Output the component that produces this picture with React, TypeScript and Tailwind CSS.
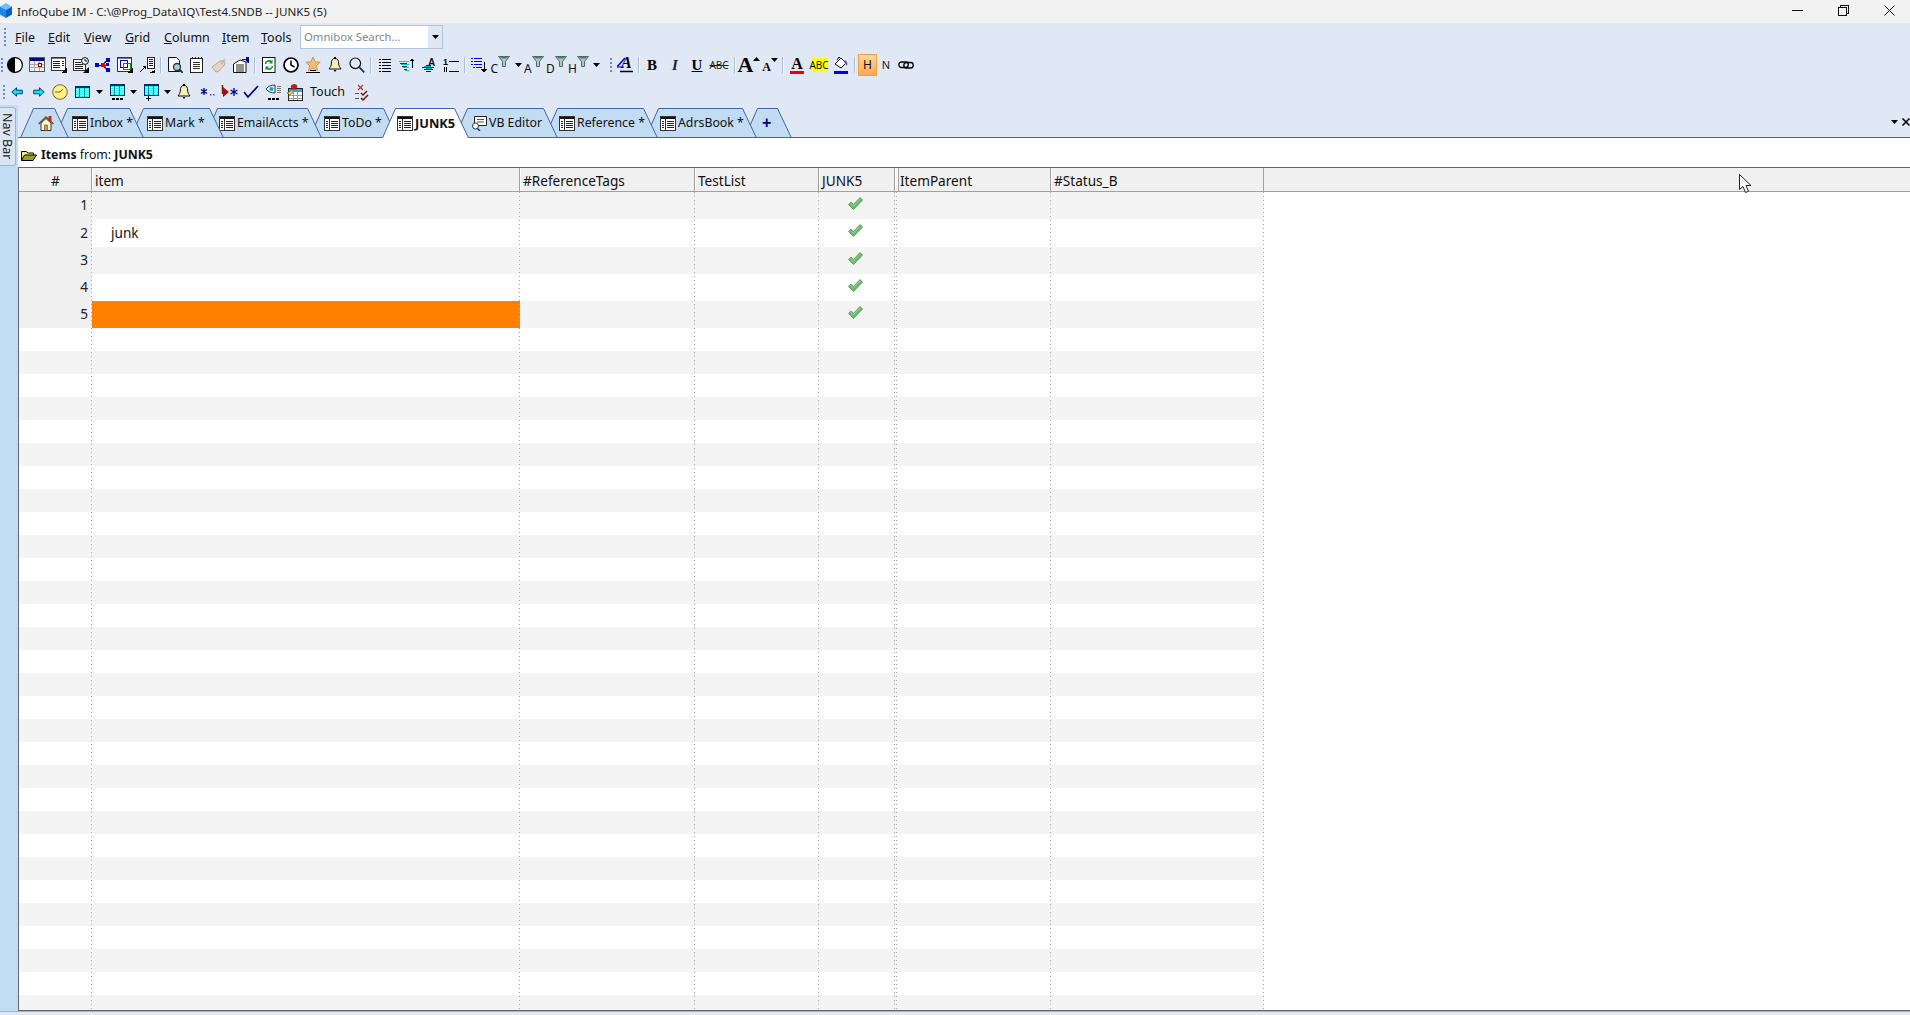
import type { ReactNode } from "react";

const COLS = "grid grid-cols-[73px_428px_175px_124px_76px_2px_154px_213px]";
const DOTS =
  "bg-[repeating-linear-gradient(to_bottom,#a8a8a8_0,#a8a8a8_1px,transparent_1px,transparent_4px)]";

function Ic({ w = 16, h = 16, crisp, children }: { w?: number; h?: number; crisp?: boolean; children: ReactNode }) {
  return (
    <svg width={w} height={h} viewBox={`0 0 ${w} ${h}`} className="block shrink-0" fill="none" shapeRendering={crisp ? "crispEdges" : undefined}>
      {children}
    </svg>
  );
}

/* toolbar icons, drawn at real pixel size */
const Corner = () => <path d="M16 10v6h-6z" fill="#000" />;

const Contrast = () => (
  <Ic>
    <circle cx="8" cy="8" r="7.4" fill="#fff" stroke="#000" strokeWidth="1.2" />
    <path d="M8 .6a7.4 7.4 0 0 0 0 14.8z" fill="#000" />
  </Ic>
);
const Calendar = () => (
  <Ic crisp>
    <rect x=".5" y=".5" width="15" height="14" fill="#eee" stroke="#555" />
    <rect x="1" y="1" width="14" height="3" fill="#000080" />
    <path d="M1 7.5h14M1 10.5h14M5.5 4v10M10.5 4v10" stroke="#aaa" />
    <rect x="9.5" y="6.5" width="3" height="3" fill="#fff" stroke="#a00000" />
  </Ic>
);
const ListCorner = () => (
  <Ic crisp>
    <rect x=".5" y=".5" width="14" height="13" fill="#fff" stroke="#333" />
    <rect x="1" y="1" width="13" height="1" fill="#777" />
    <path d="M2 4.5h7M2 6.5h7M2 8.5h7M2 10.5h7M11 4.5h2M11 6.5h2M11 8.5h2" stroke="#222" />
    <Corner />
  </Ic>
);
const ListClock = () => (
  <Ic>
    <g shapeRendering="crispEdges">
      <rect x=".5" y="2.5" width="12" height="11" fill="#fff" stroke="#333" />
      <path d="M2 5.5h6M2 7.5h8M2 9.5h8M2 11.5h8" stroke="#222" />
    </g>
    <circle cx="12" cy="4" r="3.4" fill="#fff" stroke="#000" />
    <path d="M12 2v2h2" stroke="#000" />
    <Corner />
  </Ic>
);
const Tree = () => (
  <Ic crisp>
    <path d="M4 8h8M8 8 12 3M8 8l4 5" stroke="#111" />
    <rect x="0" y="6" width="4" height="4" fill="#0000e0" />
    <rect x="6" y="6" width="4" height="4" fill="#e00000" />
    <rect x="11" y="1" width="4" height="4" fill="#0000e0" />
    <rect x="11" y="6" width="3" height="3" fill="#0000e0" />
    <rect x="11" y="11" width="4" height="4" fill="#0000e0" />
  </Ic>
);
const Frames = () => (
  <Ic crisp>
    <rect x=".5" y=".5" width="14" height="14" fill="#fff" stroke="#333" />
    <rect x="1" y="1" width="13" height="1" fill="#777" />
    <rect x="3.5" y="3.5" width="7" height="7" stroke="#0000d0" />
    <rect x="6.5" y="6.5" width="7" height="6" stroke="#009000" />
    <Corner />
  </Ic>
);
const DocArrow = () => (
  <Ic crisp>
    <rect x="8.5" y=".5" width="7" height="11" fill="#fff" stroke="#222" />
    <path d="M10 2.5h4M10 4.5h4M10 6.5h4M10 8.5h4" stroke="#222" />
    <path d="M1 15l5-5" stroke="#000" shapeRendering="auto" />
    <path d="M3 9h4v4zM10 16h6v-3z" fill="#000" />
  </Ic>
);
const DocMag = () => (
  <Ic>
    <path d="M1.5.5h8l3 3v11h-11z" fill="#fff" stroke="#111" />
    <circle cx="10" cy="10" r="3.5" fill="#9fd4d8" stroke="#333" strokeWidth="1.3" />
    <path d="M12.5 12.5 16 16" stroke="#224" strokeWidth="1.8" />
  </Ic>
);
const Notepad = () => (
  <Ic w={14} crisp>
    <rect x=".5" y="1.5" width="12" height="14" rx="1" fill="#fff" stroke="#222" />
    <path d="M2 .5h1M5 .5h1M8 .5h1M11 .5h1" stroke="#222" />
    <path d="M3 5.5h7M3 7.5h7M3 9.5h7M3 11.5h7" stroke="#333" />
  </Ic>
);
const Tag = () => (
  <Ic>
    <path d="M1 10 9 4h4l1 3-6 7-3 1z" fill="#e2d6c4" stroke="#bba98f" />
    <circle cx="11" cy="6" r="1" fill="#fff" stroke="#ab9b82" strokeWidth=".6" />
    <path d="M11 5c1-3 4-4 3-1" stroke="#b8ab98" strokeWidth=".8" />
  </Ic>
);
const TagList = () => (
  <Ic>
    <path d="M.5 7 7 3l6 2v10.5H.5z" fill="#fff" stroke="#111" />
    <path d="M3 8h8M3 10h8M3 12h8M3 14h8" stroke="#222" />
    <path d="M9 2.5h5" stroke="#222" />
    <path d="M13 0h3v6h-1l-2-2z" fill="#000080" />
  </Ic>
);
const Recycle = () => (
  <Ic w={14}>
    <rect x=".5" y=".5" width="12.5" height="15" fill="#fff" stroke="#111" />
    <path d="M3.5 7a3.5 3.5 0 0 1 6-2" stroke="#0a8f2a" strokeWidth="1.6" />
    <path d="M10.5 9a3.5 3.5 0 0 1-6 2" stroke="#0a8f2a" strokeWidth="1.6" />
    <path d="M10.5 2.5v4h-3.5zM3.5 13.5v-4h3.5z" fill="#0a8f2a" />
  </Ic>
);
const Clock = () => (
  <Ic>
    <circle cx="8" cy="8" r="7" fill="#fff" stroke="#000" strokeWidth="1.7" />
    <path d="M8 3.5V8l3.5 2" stroke="#000" strokeWidth="1.5" />
  </Ic>
);
const StarLine = () => (
  <Ic>
    <path d="M8 0l2.2 4.7 5 .6-3.7 3.4 1 5L8 11.2l-4.5 2.5 1-5L.8 5.3l5-.6z" fill="#f4bd72" stroke="#c58b4a" strokeWidth=".8" />
    <rect x="1" y="15" width="14" height="1" fill="#000" />
    <rect x="5" y="13" width="6" height="1" fill="#000" />
  </Ic>
);
const Bell = () => (
  <Ic w={14}>
    <path d="M7 1.5c-2.6 0-3.6 2-3.6 4.5 0 3-1.4 4.5-2.4 6h12c-1-1.500-2.400-3-2.400-6C10.600 3.500 9.600 1.500 7 1.500z" fill="#f5f0b8" stroke="#111" />
    <path d="M5.500 13h3l-1.500 2z" fill="#000" />
    <rect x="6" y="0" width="2" height="2" fill="#000" />
  </Ic>
);
const Mag = () => (
  <Ic>
    <circle cx="6.300" cy="6.300" r="5.300" fill="none" stroke="#111" strokeWidth="1.200" />
    <path d="M10.200 10.200 15.300 15.300" stroke="#1a2f8f" strokeWidth="1.800" />
  </Ic>
);
const Lines = () => (
  <Ic w={12} crisp>
    <path d="M0 2.500h2M3 2.500h9M0 5.500h2M3 5.500h9M0 8.500h2M3 8.500h9M0 11.500h2M3 11.500h9M0 14.500h2M3 14.500h9" stroke="#000" />
  </Ic>
);
const CyanList = () => (
  <Ic crisp>
    <path d="M0 4.500h10M2 7.500h8M4 10.500h6M6 13.500h4" stroke="#00c8e0" />
    <path d="M1 6.500h7M3 9.500h5M5 12.500h3" stroke="#333" />
    <path d="M13 3v8" stroke="#000" />
    <path d="M13 1l2.500 3h-5z" fill="#000" />
  </Ic>
);
const ALines = () => (
  <Ic>
    <text x="7" y="9" fontFamily="Liberation Sans" fontSize="10" fontWeight="700" fill="#111">A</text>
    <g shapeRendering="crispEdges">
      <path d="M5 8.500h5M1 10.500h12M3 12.500h9M5 14.500h5" stroke="#222" />
      <path d="M3 9.500h7M5 11.500h6" stroke="#00b0c0" />
    </g>
  </Ic>
);
const NumLines = () => (
  <Ic>
    <text x="0" y="8" fontFamily="Liberation Sans" fontSize="9" fontWeight="700" fill="#000">1</text>
    <g shapeRendering="crispEdges">
      <path d="M6 4.500h10M6 14.500h10" stroke="#000" />
      <path d="M1.500 10v5M3.500 10v5" stroke="#000" />
    </g>
  </Ic>
);
const BlueList = () => (
  <Ic crisp>
    <path d="M0 1.500h2M3 1.500h8M0 4.500h2M3 4.500h8M0 7.500h2M3 7.500h8M2 10.500h2M5 10.500h6" stroke="#0000f0" />
    <path d="M13 5v8" stroke="#000" />
    <path d="M13 16l-3-4h6z" fill="#000" />
  </Ic>
);
const Funnel = () => (
  <svg width="12" height="11" viewBox="0 0 12 11" className="block">
    <path d="M.5.5h11L7.500 5.500v5h-3v-5z" fill="#b4c6c4" stroke="#4f6a66" />
    <path d="M2 1h8L8.500 2.500h-5z" fill="#2a8a82" />
  </svg>
);
function FilterLetter({ ch }: { ch: string }) {
  return (
    <div className="flex h-[22px] w-[22px] items-start pt-[2px]">
      <span className="mt-[7px] text-[12px] leading-[12px] text-[#111]">{ch}</span>
      <Funnel />
    </div>
  );
}
const Caret = () => (
  <svg width="7" height="4" viewBox="0 0 7 4" className="block shrink-0"><path d="M0 0h7L3.500 4z" fill="#000" /></svg>
);
const Gripper = () => (
  <div className="h-[14px] w-[2px] shrink-0 bg-[repeating-linear-gradient(to_bottom,#5f8fd0_0,#5f8fd0_2px,transparent_2px,transparent_4px)]" />
);
const Sep = () => (
  <div className="flex w-[6px] shrink-0 justify-center"><div className="h-[16px] w-[2px] border-l border-r border-l-[#a9bdd4] border-r-[#f4f8fc]" /></div>
);
const ArrowL = () => (
  <Ic w={12} h={10}><path d="M.8 5 5.500.8v2.400h5.800v3.600H5.500v2.400z" fill="#00e6f0" stroke="#003c80" /></Ic>
);
const ArrowR = () => (
  <Ic w={12} h={10}><path d="M11.200 5 6.500.8v2.400H.7v3.600h5.800v2.400z" fill="#00e6f0" stroke="#003c80" /></Ic>
);
const YClock = () => (
  <Ic>
    <circle cx="8" cy="8" r="7.300" fill="#fff08a" stroke="#7a6a20" />
    <path d="M8 8H3M8 8l3-3" stroke="#7a6a20" strokeWidth="1" />
  </Ic>
);
function CyanTable({ extra }: { extra?: "dots" | "plus" }) {
  return (
    <svg width="15" height="17" viewBox="0 0 15 17" className="block" shapeRendering="crispEdges">
      <rect x=".5" y=".5" width="14" height="11" fill="#30f0f0" stroke="#003060" />
      <path d="M1 3.500h13M1 5.500h13M1 7.500h13M1 9.500h13" stroke="#dffcfc" />
      <path d="M4.500 1v10M9.500 1v10" stroke="#208aa0" />
      <rect x="1" y="1" width="13" height="1" fill="#003060" />
      {extra === "dots" && <path d="M2 14h3v2H2zM6 14h3v2H6zM10 14h3v2h-3z" fill="#000" />}
      {extra === "plus" && <path d="M4 12h1v5H4zM2 14h5v1H2z" fill="#000" />}
    </svg>
  );
}
const StarDots = () => (
  <Ic h={12}>
    <path d="M4 2v7M1 3.500l6 4M7 3.500l-6 4" stroke="#000080" strokeWidth="1.300" />
    <rect x="10" y="8" width="1.500" height="1.500" fill="#555" />
    <rect x="13" y="8" width="1.500" height="1.500" fill="#555" />
  </Ic>
);
const RedStar = () => (
  <Ic w={17} h={14}>
    <path d="M1.500 0v9" stroke="#a01010" strokeWidth="1.500" />
    <path d="M2 2l6 5-6 5z" fill="#a01010" />
    <path d="M13 3v8M9.500 5l7 4M16.500 5l-7 4" stroke="#000080" strokeWidth="1.300" />
  </Ic>
);
const Check = () => (
  <Ic h={14}><path d="M1 7l4 5L15 1" stroke="#000080" strokeWidth="1.700" /></Ic>
);
const EyeList = () => (
  <Ic h={17}>
    <path d="M1 5c2-3 6-4 9-4v8C7 9 3 8 1 5z" fill="#d8f4f8" stroke="#222" strokeWidth=".9" />
    <circle cx="6.500" cy="5" r="2" fill="#00b0c8" />
    <path d="M12 2.500h4M12 4.500h4M12 6.500h4M12 8.500h4" stroke="#777" shapeRendering="crispEdges" />
    <path d="M3 14h3v2H3zM7 14h3v2H7zM11 14h3v2h-3z" fill="#000" />
  </Ic>
);
const CalTouch = () => (
  <Ic h={17}>
    <g shapeRendering="crispEdges">
      <rect x="1.500" y="4.500" width="14" height="12" fill="#fff" stroke="#222" />
      <rect x="2" y="5" width="13" height="3" fill="#20a8e8" />
      <path d="M2 11.500h13M2 14.500h13M6.500 8v8M10.500 8v8" stroke="#999" />
    </g>
    <path d="M4 2c2-2 5-2 6 0l-1 3H5z" fill="#d01818" stroke="#601010" strokeWidth=".6" />
    <path d="M0 9l5-3 2 1-4 4z" fill="#e8d020" stroke="#555" strokeWidth=".6" />
  </Ic>
);
const XChecks = () => (
  <Ic w={15} h={17}>
    <path d="M3 1l5 5M8 1 3 6" stroke="#b03030" strokeWidth="1.100" />
    <g shapeRendering="crispEdges"><path d="M0 9.500h4M0 14.500h4" stroke="#555" /></g>
    <path d="M6 9l2 2 4-4M6 14l2 2 5-5" stroke="#7a1010" strokeWidth="1.500" />
  </Ic>
);
const AUnder = () => (
  <div className="relative h-[16px] w-[16px]">
    <span className="absolute left-[4px] top-[-2px] font-['Liberation_Serif'] text-[16px] font-bold italic leading-[16px] text-black">A</span>
    <svg width="16" height="16" viewBox="0 0 16 16" className="absolute left-0 top-0">
      <path d="M0 10 8 1" stroke="#0000f0" strokeWidth="1.500" />
      <path d="M0 10h7" stroke="#0000f0" />
      <path d="M3 14.500h13" stroke="#000" strokeWidth="1.500" />
    </svg>
  </div>
);
const Bucket = () => (
  <Ic h={18}>
    <path d="M2 8 8 2l5 5-5 5z" fill="#fff" stroke="#111" />
    <path d="M4 4l2-3 1 1" stroke="#111" />
    <path d="M12 4c2 1 3 3 2 6-1-1-2-3-3-4z" fill="#6b5fa8" />
    <rect x="1" y="15" width="14" height="3" fill="#0000f0" />
  </Ic>
);
const LinkIc = () => (
  <Ic h={10}>
    <rect x=".8" y="2" width="9.500" height="5.500" rx="2.700" stroke="#000" strokeWidth="1.300" />
    <rect x="5.800" y="2.500" width="9.500" height="5.500" rx="2.700" stroke="#000" strokeWidth="1.300" />
  </Ic>
);

function Tool({ cls = "w-[22px]", children }: { cls?: string; children: ReactNode }) {
  return <div className={`flex h-full shrink-0 items-center justify-center ${cls}`}>{children}</div>;
}

/* tab strip icons */
const TableIc = () => (
  <Ic crisp h={15}>
    <rect x=".5" y=".5" width="15" height="14" fill="#fff" stroke="#333" />
    <rect x="1" y="1" width="14" height="2" fill="#111" />
    <path d="M5.500 3v11" stroke="#333" />
    <path d="M2 5.500h2M7 5.500h7M2 7.500h2M7 7.500h7M2 9.500h2M7 9.500h7M2 11.500h2M7 11.500h7" stroke="#222" />
  </Ic>
);
const HomeIc = () => (
  <Ic h={15}>
    <rect x="10.500" y="0" width="3" height="5" fill="#d02020" />
    <path d="M3 7v7.500h10V7L8 2.500z" fill="#fff8d8" stroke="#333" />
    <path d="M.5 8 8 1l7.500 7" stroke="#8a4a10" strokeWidth="1.500" />
    <rect x="6.500" y="9" width="3" height="5.500" fill="#e09a20" stroke="#333" strokeWidth=".5" />
  </Ic>
);
const VbIc = () => (
  <Ic h={15}>
    <path d="M3.500.5h12v9H8l-3 2V9.500H3.500z" fill="#fff" stroke="#222" />
    <path d="M6 3.500h7M6 6h7" stroke="#555" />
    <circle cx="4.500" cy="10" r="3" fill="#fff" stroke="#333" />
    <path d="M6.500 12.500 9 15" stroke="#1a2f8f" strokeWidth="1.500" />
  </Ic>
);

type TabDef = { key: string; icon?: ReactNode; text?: string; active?: boolean; plus?: boolean; w: number; cls: string };
const TABS: TabDef[] = [
  { key: "home", icon: <HomeIc />, w: 49, cls: "w-[49px] pl-[18px] z-[10]" },
  { key: "inbox", icon: <TableIc />, text: "Inbox *", w: 90, cls: "w-[90px] pl-[18px] ml-[-15px] z-[9]" },
  { key: "mark", icon: <TableIc />, text: "Mark *", w: 94, cls: "w-[94px] pl-[17px] ml-[-14px] z-[8]" },
  { key: "email", icon: <TableIc />, text: "EmailAccts *", w: 118, cls: "w-[118px] pl-[15px] ml-[-20px] z-[7]" },
  { key: "todo", icon: <TableIc />, text: "ToDo *", w: 89, cls: "w-[89px] pl-[15px] ml-[-13px] z-[6]" },
  { key: "junk", icon: <TableIc />, text: "JUNK5", active: true, w: 87, cls: "w-[87px] pl-[15px] ml-[-16px] z-[20]" },
  { key: "vb", icon: <VbIc />, text: "VB Editor", w: 104, cls: "w-[104px] pl-[17px] ml-[-15px] z-[5]" },
  { key: "ref", icon: <TableIc />, text: "Reference *", w: 114, cls: "w-[114px] pl-[15px] ml-[-14px] z-[4]" },
  { key: "adrs", icon: <TableIc />, text: "AdrsBook *", w: 112, cls: "w-[112px] pl-[15px] ml-[-13px] z-[3]" },
  { key: "plus", plus: true, w: 48, cls: "w-[48px] pl-[18px] ml-[-13px] z-[2]" },
];

function Tab({ t }: { t: TabDef }) {
  return (
    <div className={`relative mb-[-1px] flex h-[30px] shrink-0 items-center ${t.cls}`}>
      <svg width={t.w} height="30" viewBox={`0 0 ${t.w} 30`} className="absolute left-0 top-0">
        <path d={`M0.500 30 13.500 .5H${t.w - 14.5}L${t.w - 0.5} 30Z`} fill={t.active ? "#fff" : "#c1dcf3"} />
        <path d={`M0.500 30 13.500 .5H${t.w - 14.5}L${t.w - 0.5} 30`} stroke="#3f66a3" fill="none" />
        {!t.active && <path d={`M0 29.500H${t.w}`} stroke="#3f66a3" />}
      </svg>
      <div className="relative flex items-center gap-[2px]">
        {t.icon}
        {t.text && <span className={`leading-[18px] text-[#111] ${t.active ? "text-[12.800px] font-bold" : "text-[12.300px]"}`}>{t.text}</span>}
        {t.plus && <span className="font-['Liberation_Sans'] text-[16px] font-bold leading-[18px] text-[#000080]">+</span>}
      </div>
    </div>
  );
}

const HEAD = ["#", "item", "#ReferenceTags", "TestList", "JUNK5", "", "ItemParent", "#Status_B"];

const GreenCheck = () => (
  <svg width="15" height="13" viewBox="0 0 15 13" className="block">
    <path d="M.5 7.500 3 5l2.500 2.500L12 .5l2.500 2.500L5.500 12.500z" fill="#6cb96c" stroke="#4c954c" strokeWidth=".8" />
    <path d="M2.500 6.500 5.500 9 12 2" stroke="#a6dca6" strokeWidth=".8" fill="none" />
  </svg>
);

const TOP_ROWS = [
  { n: 1, h: "h-[27px]", bg: "bg-[#f4f4f4]" },
  { n: 2, h: "h-[28px]", bg: "bg-white" },
  { n: 3, h: "h-[27px]", bg: "bg-[#f4f4f4]" },
  { n: 4, h: "h-[27px]", bg: "bg-white" },
  { n: 5, h: "h-[27px]", bg: "bg-[#f4f4f4]" },
];

export default function App() {
  return (
    <div className="flex h-[1015px] w-[1910px] flex-col overflow-hidden bg-white font-['Noto_Sans',sans-serif] text-[13px] text-[#111]">
      {/* title bar */}
      <div className="flex h-[23px] shrink-0 items-center bg-[#f2f2f2]">
        <svg width="13" height="15" viewBox="0 0 13 15" className="mb-[2px] block">
          <path d="M0 3.500 6 0l6 3.500L6 7z" fill="#6cc0ff" />
          <path d="M0 3.500 6 7v8L0 11.500z" fill="#1c86e8" />
          <path d="M12 3.500 6 7v8l6-3.500z" fill="#0a62c0" />
        </svg>
        <span className="ml-[4px] text-[11.600px] leading-none text-[#222]">{"InfoQube IM - C:\\@Prog_Data\\IQ\\Test4.SNDB -- JUNK5 (5)"}</span>
        <div className="ml-auto flex h-full items-center pb-[3px]">
          <Tool cls="w-[45px]"><svg width="11" height="1"><rect width="11" height="1" fill="#111" /></svg></Tool>
          <Tool cls="w-[46px]">
            <svg width="11" height="11" viewBox="0 0 11 11" shapeRendering="crispEdges">
              <rect x=".5" y="2.500" width="8" height="8" stroke="#111" fill="none" />
              <path d="M2.500 2.500V.5h8v8h-2" stroke="#111" fill="none" />
            </svg>
          </Tool>
          <Tool cls="w-[42px] ml-[2px]">
            <svg width="11" height="11" viewBox="0 0 11 11"><path d="M.5.500l10 10M10.500.5l-10 10" stroke="#111" /></svg>
          </Tool>
        </div>
      </div>

      {/* menu row */}
      <div className="flex h-[28px] shrink-0 items-center bg-[#dfe8f4] pl-[4px]">
        <div className="h-[18px] w-[2px] bg-[repeating-linear-gradient(to_bottom,#5f8fd0_0,#5f8fd0_2px,transparent_2px,transparent_4px)]" />
        <div className="flex items-center pl-[9px] pt-[2px] text-[12.500px] leading-[18px]">
          <span className="w-[33px]"><u>F</u>ile</span>
          <span className="w-[36px]"><u>E</u>dit</span>
          <span className="w-[41px]"><u>V</u>iew</span>
          <span className="w-[39px]"><u>G</u>rid</span>
          <span className="w-[58px]"><u>C</u>olumn</span>
          <span className="w-[39px]"><u>I</u>tem</span>
          <span className="w-[39px]"><u>T</u>ools</span>
        </div>
        <div className="flex h-[24px] w-[143px] items-center border border-[#b3c4dd] bg-white pl-[3px]">
          <span className="flex-1 text-[11.300px] leading-none text-[#7d8a99]">Omnibox Search...</span>
          <div className="flex h-full w-[14px] items-center justify-center bg-[#dfe8f4]"><Caret /></div>
        </div>
      </div>

      {/* toolbar one */}
      <div className="flex h-[28px] shrink-0 items-center bg-[#dfe8f4] pl-[1px]">
        <div className="w-[3px]"><Gripper /></div>
        <Tool><Contrast /></Tool>
        <Tool><Calendar /></Tool>
        <Tool><ListCorner /></Tool>
        <Tool><ListClock /></Tool>
        <Tool><Tree /></Tool>
        <Tool><Frames /></Tool>
        <Tool><DocArrow /></Tool>
        <Sep />
        <Tool><DocMag /></Tool>
        <Tool><Notepad /></Tool>
        <Tool><Tag /></Tool>
        <Tool><TagList /></Tool>
        <Sep />
        <Tool><Recycle /></Tool>
        <Tool><Clock /></Tool>
        <Tool><StarLine /></Tool>
        <Tool><Bell /></Tool>
        <Tool><Mag /></Tool>
        <Sep />
        <Tool><Lines /></Tool>
        <Tool><CyanList /></Tool>
        <Tool><ALines /></Tool>
        <Tool><NumLines /></Tool>
        <Sep />
        <Tool><BlueList /></Tool>
        <Tool cls="w-[23px]"><FilterLetter ch="C" /></Tool>
        <Tool cls="w-[11px]"><Caret /></Tool>
        <Tool><FilterLetter ch="A" /></Tool>
        <Tool><FilterLetter ch="D" /></Tool>
        <Tool><FilterLetter ch="H" /></Tool>
        <Tool cls="w-[12px]"><Caret /></Tool>
        <Tool cls="w-[12px] pl-[5px]"><Gripper /></Tool>
        <Tool cls="w-[22px]"><AUnder /></Tool>
        <Sep />
        <Tool cls="w-[20px] font-['Liberation_Serif'] text-[15px] font-bold text-black">B</Tool>
        <Tool cls="w-[26px] font-['Liberation_Serif'] text-[15px] font-bold italic text-[#222]">I</Tool>
        <Tool cls="w-[18px] font-['Liberation_Serif'] text-[15px] font-bold text-black underline">U</Tool>
        <Tool cls="w-[26px] text-[10px] text-[#222] line-through">ABC</Tool>
        <Sep />
        <Tool cls="w-[22px]">
          <span className="font-['Liberation_Serif'] text-[22px] font-bold leading-none text-black">A</span>
          <svg width="7" height="4" className="mb-[12px] shrink-0"><path d="M0 4h7L3.500 0z" fill="#000" /></svg>
        </Tool>
        <Tool cls="w-[20px]">
          <span className="mt-[3px] font-['Liberation_Serif'] text-[12px] font-bold leading-none text-black">A</span>
          <svg width="7" height="4" className="mb-[10px] shrink-0"><path d="M0 0h7L3.500 4z" fill="#000" /></svg>
        </Tool>
        <Sep />
        <Tool cls="w-[22px]">
          <div className="flex h-[19px] w-[14px] flex-col items-center">
            <span className="font-['Liberation_Serif'] text-[16px] font-bold leading-[15px] text-black">A</span>
            <div className="h-[3px] w-[14px] bg-[#f00000]" />
          </div>
        </Tool>
        <Tool cls="w-[22px]"><span className="flex h-[14px] w-[16px] items-center justify-center bg-[#ffff00] text-[10px] leading-none text-[#111]">ABC</span></Tool>
        <Tool cls="w-[22px]"><Bucket /></Tool>
        <Sep />
        <div className="flex h-[22px] w-[19px] shrink-0 items-center justify-center border border-[#f0a040] bg-[linear-gradient(to_bottom,#ffd8a0,#ffa94d)] text-[12px] leading-none text-[#111]">H</div>
        <Tool cls="w-[18px] text-[11px] text-[#222]">N</Tool>
        <Tool cls="w-[22px]"><LinkIc /></Tool>
      </div>

      {/* toolbar two */}
      <div className="flex h-[26px] shrink-0 items-center bg-[#dfe8f4] pl-[3px]">
        <div className="w-[3px]"><Gripper /></div>
        <Tool><ArrowL /></Tool>
        <Tool><ArrowR /></Tool>
        <Tool cls="w-[20px]"><YClock /></Tool>
        <Tool cls="w-[24px] pt-[5px]"><CyanTable /></Tool>
        <Tool cls="w-[11px]"><Caret /></Tool>
        <Tool cls="w-[24px]"><CyanTable extra="dots" /></Tool>
        <Tool cls="w-[9px]"><Caret /></Tool>
        <Tool cls="w-[26px]"><CyanTable extra="plus" /></Tool>
        <Tool cls="w-[7px]"><Caret /></Tool>
        <Tool cls="w-[26px]"><Bell /></Tool>
        <Tool cls="w-[22px]"><StarDots /></Tool>
        <Tool cls="w-[21px]"><RedStar /></Tool>
        <Tool cls="w-[22px]"><Check /></Tool>
        <Tool cls="w-[22px]"><EyeList /></Tool>
        <Tool cls="w-[22px]"><CalTouch /></Tool>
        <span className="ml-[4px] w-[42px] text-[12.500px] leading-none">Touch</span>
        <Tool cls="w-[20px]"><XChecks /></Tool>
      </div>

      {/* nav column + workspace */}
      <div className="flex min-h-0 flex-1">
        <div className="w-[18px] shrink-0 bg-[#c1dcf3] pt-[2px]">
          <div className="flex h-[59px] w-[16px] items-center justify-center rounded-r-[3px] border border-l-0 border-[#a3b3c3] bg-[#dbe6f3] pr-[2px]">
            <span className="text-[12.500px] leading-none text-[#222] [writing-mode:vertical-rl]">Nav Bar</span>
          </div>
        </div>

        <div className="relative flex min-w-0 flex-1 flex-col">
          {/* tab strip */}
          <div className="flex h-[33px] shrink-0 items-end border-b border-[#3f66a3] bg-[#dfe8f4] pl-[2px]">
            {TABS.map((t) => (
              <Tab key={t.key} t={t} />
            ))}
          </div>
          <div className="absolute right-[-2px] top-[13px] flex items-center gap-[4px]">
            <Caret />
            <svg width="10" height="8" viewBox="0 0 10 8"><path d="M.5.5l7 7M7.500.5l-7 7" stroke="#000" strokeWidth="1.500" /></svg>
          </div>

          {/* list caption */}
          <div className="flex h-[29px] shrink-0 items-center gap-[4px] pl-[3px] pt-[5px] text-[12.300px] leading-none">
            <svg width="16" height="11" viewBox="0 0 16 11" className="block">
              <path d="M.5 10V1.500h5l1 1.500h6v2" fill="#f0f080" stroke="#000" />
              <path d="M.5 10.500 3.500 5h12l-3.500 5.500z" fill="#a0a020" stroke="#000" />
            </svg>
            <span><b className="font-bold">Items</b> from: <b className="font-bold">JUNK5</b></span>
          </div>

          {/* grid */}
          <div className="flex min-h-0 flex-1 flex-col border-b border-l border-t border-[#666]">
            <div className="flex h-[24px] shrink-0 border-b border-[#a0a0a0] bg-[#f0f0f0]">
              <div className={COLS}>
                {HEAD.map((h, i) => (
                  <div key={i} className={`flex h-[23px] items-center overflow-hidden border-l border-r border-l-white border-r-[#a0a0a0] pt-[3px] text-[13.600px] leading-none text-[#111] ${i === 0 ? "justify-center" : "pl-[2px]"}`}>
                    {h}
                  </div>
                ))}
              </div>
            </div>

            <div className="relative min-h-0 flex-1 overflow-hidden">
              {TOP_ROWS.map((r) => (
                <div key={r.n} className={`${COLS} ${r.h} w-[1245px] ${r.bg}`}>
                  <div className="flex items-center justify-end bg-[#f0f0f0] pr-[4px] pb-[1px] text-[13.600px] leading-none text-[#222]">{r.n}</div>
                  <div className={`flex items-center pl-[19px] text-[13.600px] leading-none ${r.n === 5 ? "bg-[#ff8000]" : ""}`}>{r.n === 2 ? "junk" : ""}</div>
                  <div />
                  <div />
                  <div className="flex justify-center pr-[3px] pt-[5px]"><GreenCheck /></div>
                </div>
              ))}
              {Array.from({ length: 30 }, (_, i) => (
                <div key={i} className={`h-[23px] w-[1245px] ${i % 2 === 0 ? "bg-white" : "bg-[#f4f4f4]"}`} />
              ))}

              {/* dotted column rules lie over the rows */}
              <div className={`${COLS} pointer-events-none absolute inset-y-0 left-0`}>
                {HEAD.map((h, i) => (
                  <div key={i} className={`h-full w-px justify-self-end ${DOTS}`} />
                ))}
              </div>
            </div>
          </div>

          {/* mouse pointer */}
          <svg width="14" height="20" viewBox="0 0 14 20" className="absolute left-[1721px] top-[69px]">
            <path d="M.5.5v15l3.500-3 2.500 6 3-1.200-2.500-5.800H12z" fill="#fff" stroke="#222" />
          </svg>
        </div>
      </div>

      <div className="h-[4px] shrink-0 border-t border-[#9db5d5] bg-[#dfe8f4]" />
    </div>
  );
}
